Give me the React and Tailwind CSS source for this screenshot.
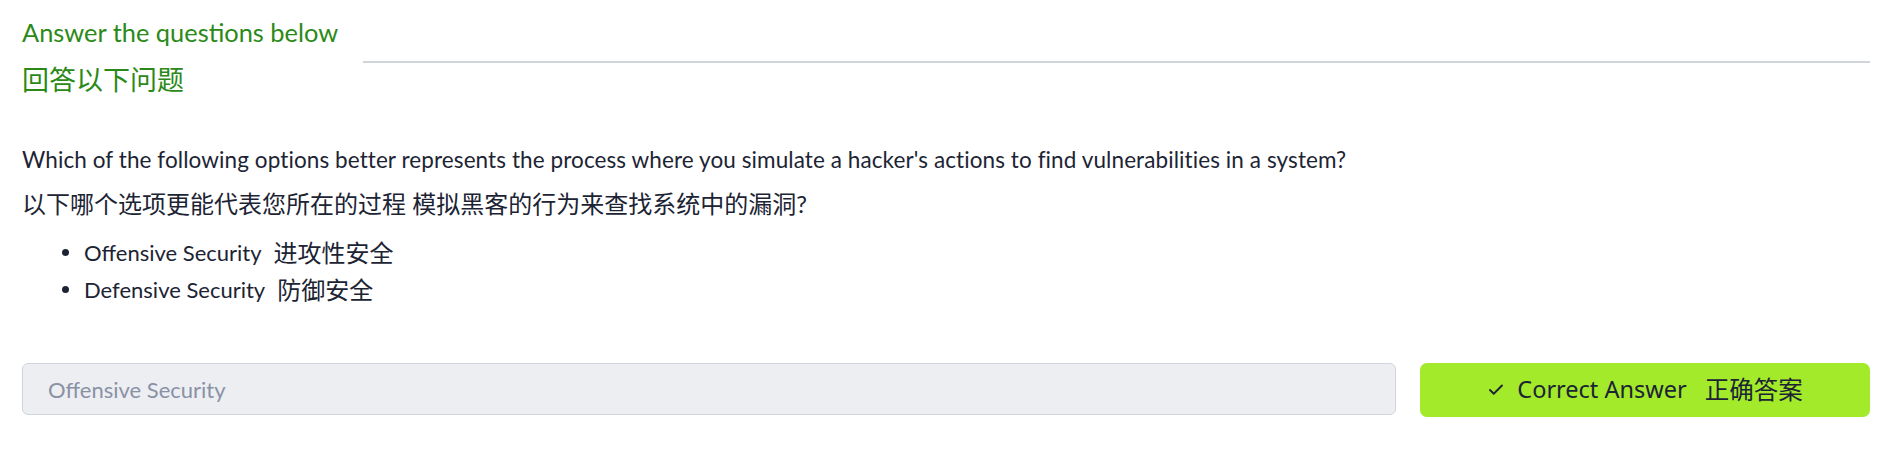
import { Check } from "lucide-react";

const latin = "font-['Lato','Noto_Sans_CJK_SC',sans-serif]";

export default function App() {
  const options = [
    { en: "Offensive Security", zh: "进攻性安全" },
    { en: "Defensive Security", zh: "防御安全" },
  ];

  return (
    <div className={`${latin} bg-white text-[#1c2434] pl-[22px] pr-[15px] pt-[17px] pb-[30px]`}>
      {/* header */}
      <div className="flex items-start">
        <div className="text-[#2b8a17]">
          <div className="text-[25.4px] leading-[31px]">Answer the questions below</div>
          <div className="mt-[14px] text-[27px] leading-[36px]">回答以下问题</div>
        </div>
        <div className="flex-1 ml-[25px] mt-[44px] h-[2px] bg-[#d1d5db]" />
      </div>

      {/* question */}
      <p className="mt-[45px] text-[22.5px] leading-[33px] tracking-[0.09px]">
        Which of the following options better represents the process where you simulate a hacker's actions to find vulnerabilities in a system?
      </p>
      <p className="mt-[10px] text-[24px] leading-[36px]">
        以下哪个选项更能代表您所在的过程 模拟黑客的行为来查找系统中的漏洞?
      </p>

      <ul className="mt-[12px]">
        {options.map((o) => (
          <li key={o.en} className="flex items-center text-[22px] leading-[37px]">
            <span className="ml-[40px] mr-[15px] w-[7px] h-[7px] rounded-full bg-[#1c2434]" />
            <span>{o.en}</span>
            <span className="ml-[12px] text-[24px] leading-none">{o.zh}</span>
          </li>
        ))}
      </ul>

      {/* answer row */}
      <div className="mt-[55px] flex items-start gap-[24px]">
        <input
          readOnly
          placeholder="Offensive Security"
          className="flex-1 h-[52px] rounded-[6px] border border-[#d1d5db] bg-[#eceef2] pl-[25px] text-[22px] placeholder:text-[#8a91a5] outline-none"
        />
        <button className="w-[450px] h-[54px] rounded-[7px] bg-[#a3ea2a] text-[#1c2434] flex items-center justify-center">
          <Check className="w-[18px] h-[18px]" strokeWidth={2.5} />
          <span className="ml-[12px] text-[23.5px] font-['Noto_Sans','Noto_Sans_CJK_SC',sans-serif]">Correct Answer</span>
          <span className="ml-[18px] text-[24.5px]">正确答案</span>
        </button>
      </div>
    </div>
  );
}
